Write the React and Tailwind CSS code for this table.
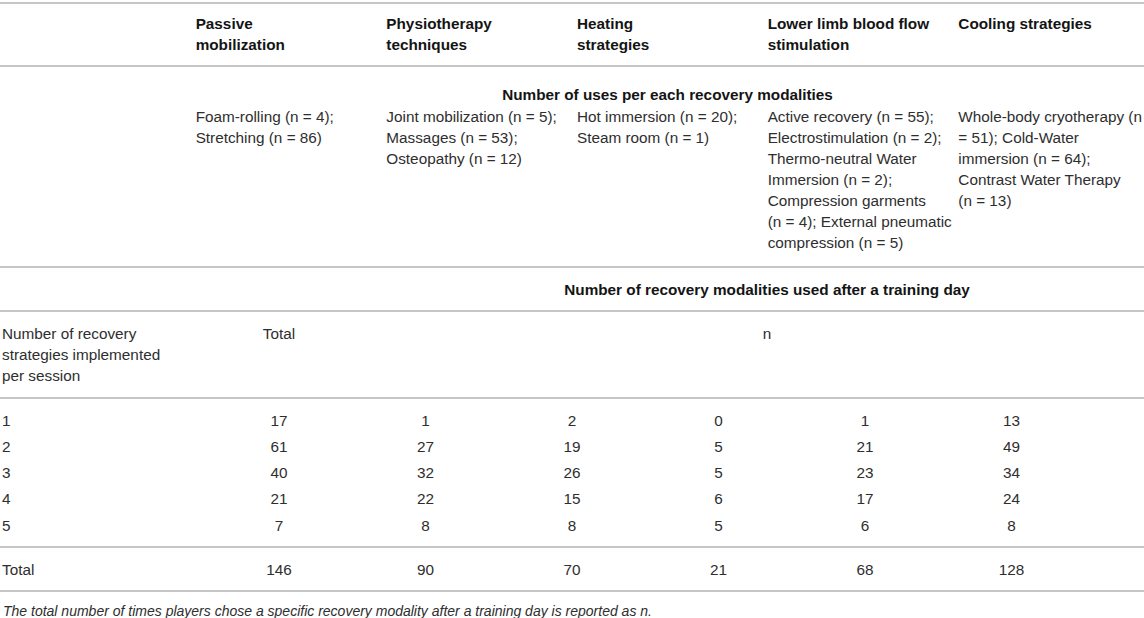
export default function App() {
  const Lines = ({ lines }) => (
    <div>
      {lines.map((l, i) => (
        <div key={i} className="whitespace-nowrap">
          {l}
        </div>
      ))}
    </div>
  );

  const header = [
    ["Passive", "mobilization"],
    ["Physiotherapy", "techniques"],
    ["Heating", "strategies"],
    ["Lower limb blood flow", "stimulation"],
    ["Cooling strategies"],
  ];

  const uses = [
    ["Foam-rolling (n = 4);", "Stretching (n = 86)"],
    ["Joint mobilization (n = 5);", "Massages (n = 53);", "Osteopathy (n = 12)"],
    ["Hot immersion (n = 20);", "Steam room (n = 1)"],
    [
      "Active recovery (n = 55);",
      "Electrostimulation (n = 2);",
      "Thermo-neutral Water",
      "Immersion (n = 2);",
      "Compression garments",
      "(n = 4); External pneumatic",
      "compression (n = 5)",
    ],
    [
      "Whole-body cryotherapy (n",
      "= 51); Cold-Water",
      "immersion (n = 64);",
      "Contrast Water Therapy",
      "(n = 13)",
    ],
  ];

  const rows = [
    ["1", "17", "1", "2", "0", "1", "13"],
    ["2", "61", "27", "19", "5", "21", "49"],
    ["3", "40", "32", "26", "5", "23", "34"],
    ["4", "21", "22", "15", "6", "17", "24"],
    ["5", "7", "8", "8", "5", "6", "8"],
  ];

  const lowerGrid =
    "grid grid-cols-[206px_146px_147px_146px_147px_146px_147px_1fr]";

  return (
    <div className="w-[1144px] h-[618px] overflow-hidden bg-white pt-[2px] font-['Liberation_Sans',Arial,Helvetica,sans-serif] text-[15.3px] leading-[21px] text-[#2e2e2e]">
      {/* Header */}
      <div className="border-t-2 border-[#c6c6c6]">
        <div className="grid grid-cols-6 pt-[9px] pb-[10px] font-bold text-[#141414]">
          <div />
          {header.map((h, i) => (
            <div key={i} className="pl-[5px]">
              <Lines lines={h} />
            </div>
          ))}
        </div>
      </div>

      {/* Uses section */}
      <div className="border-t-2 border-[#c6c6c6]">
        <div className="pl-[191px] pt-[17px] text-center font-bold text-[#141414]">
          Number of uses per each recovery modalities
        </div>
        <div className="grid grid-cols-6 pt-[1px] pb-[13px]">
          <div />
          {uses.map((u, i) => (
            <div key={i} className="pl-[5px]">
              <Lines lines={u} />
            </div>
          ))}
        </div>
      </div>

      {/* Second title */}
      <div className="border-t-2 border-[#c6c6c6]">
        <div className="pl-[390px] pt-[11px] pb-[10px] text-center font-bold text-[#141414]">
          Number of recovery modalities used after a training day
        </div>
      </div>

      {/* Column labels */}
      <div className="border-t-2 border-[#c6c6c6]">
        <div className="flex pt-[11px] pb-[11px]">
          <div className="w-[206px] pl-[2px]">
            <Lines
              lines={["Number of recovery", "strategies implemented", "per session"]}
            />
          </div>
          <div className="w-[146px] text-center">Total</div>
          <div className="w-[38px]" />
          <div className="flex-1 text-center">n</div>
        </div>
      </div>

      {/* Data rows */}
      <div className="border-t-2 border-[#c6c6c6]">
        <div className="pt-[8px] pb-[8px]">
          {rows.map((r, i) => (
            <div key={i} className={`${lowerGrid} h-[26.25px] items-center`}>
              {r.map((c, j) => (
                <div key={j} className={j === 0 ? "pl-[2px]" : "text-center"}>
                  {c}
                </div>
              ))}
              <div />
            </div>
          ))}
        </div>
      </div>

      {/* Total */}
      <div className="border-t-2 border-[#c6c6c6]">
        <div className={`${lowerGrid} pt-[11px] pb-[10px]`}>
          {["Total", "146", "90", "70", "21", "68", "128"].map((c, j) => (
            <div key={j} className={j === 0 ? "pl-[2px]" : "text-center"}>
              {c}
            </div>
          ))}
          <div />
        </div>
      </div>

      {/* Footnote */}
      <div className="border-t-2 border-[#c6c6c6]">
        <div className="pl-[3px] pt-[9px] text-[14px] leading-[20px] italic whitespace-nowrap">
          The total number of times players chose a specific recovery modality after a training day is reported as n.
        </div>
      </div>
    </div>
  );
}
